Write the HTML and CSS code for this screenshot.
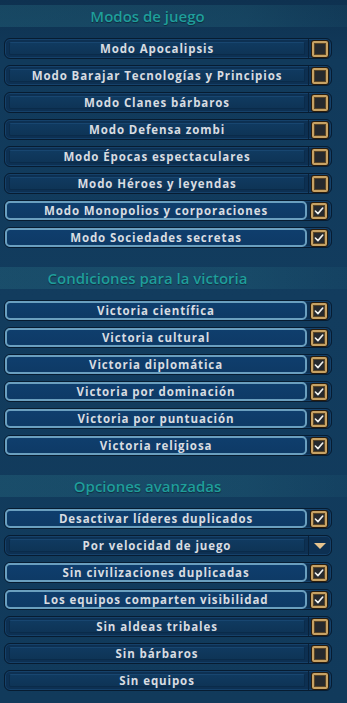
FILE: index.html
```html
<!DOCTYPE html>
<html lang="es">
<head>
<meta charset="utf-8">
<link rel="stylesheet" href="styles.css">
</head>
<body>
<div class="panel">
  <section class="sec">
    <h2 class="hdr">Modos de juego</h2>
    <ul class="rows">
      <li class="row"><span class="label">Modo Apocalipsis</span><span class="ctl"><span class="box"></span></span></li>
      <li class="row"><span class="label">Modo Barajar Tecnologías y Principios</span><span class="ctl"><span class="box"></span></span></li>
      <li class="row"><span class="label">Modo Clanes bárbaros</span><span class="ctl"><span class="box"></span></span></li>
      <li class="row"><span class="label">Modo Defensa zombi</span><span class="ctl"><span class="box"></span></span></li>
      <li class="row"><span class="label">Modo Épocas espectaculares</span><span class="ctl"><span class="box"></span></span></li>
      <li class="row"><span class="label">Modo Héroes y leyendas</span><span class="ctl"><span class="box"></span></span></li>
      <li class="row on"><span class="label">Modo Monopolios y corporaciones</span><span class="ctl"><span class="box"><svg viewBox="0 0 15 15"><path d="M3 7.5 L6.2 10.8 L12.2 3.8"/></svg></span></span></li>
      <li class="row on"><span class="label">Modo Sociedades secretas</span><span class="ctl"><span class="box"><svg viewBox="0 0 15 15"><path d="M3 7.5 L6.2 10.8 L12.2 3.8"/></svg></span></span></li>
    </ul>
  </section>
  <section class="sec">
    <h2 class="hdr">Condiciones para la victoria</h2>
    <ul class="rows">
      <li class="row on"><span class="label">Victoria científica</span><span class="ctl"><span class="box"><svg viewBox="0 0 15 15"><path d="M3 7.5 L6.2 10.8 L12.2 3.8"/></svg></span></span></li>
      <li class="row on"><span class="label">Victoria cultural</span><span class="ctl"><span class="box"><svg viewBox="0 0 15 15"><path d="M3 7.5 L6.2 10.8 L12.2 3.8"/></svg></span></span></li>
      <li class="row on"><span class="label">Victoria diplomática</span><span class="ctl"><span class="box"><svg viewBox="0 0 15 15"><path d="M3 7.5 L6.2 10.8 L12.2 3.8"/></svg></span></span></li>
      <li class="row on"><span class="label">Victoria por dominación</span><span class="ctl"><span class="box"><svg viewBox="0 0 15 15"><path d="M3 7.5 L6.2 10.8 L12.2 3.8"/></svg></span></span></li>
      <li class="row on"><span class="label">Victoria por puntuación</span><span class="ctl"><span class="box"><svg viewBox="0 0 15 15"><path d="M3 7.5 L6.2 10.8 L12.2 3.8"/></svg></span></span></li>
      <li class="row on"><span class="label">Victoria religiosa</span><span class="ctl"><span class="box"><svg viewBox="0 0 15 15"><path d="M3 7.5 L6.2 10.8 L12.2 3.8"/></svg></span></span></li>
    </ul>
  </section>
  <section class="sec">
    <h2 class="hdr">Opciones avanzadas</h2>
    <ul class="rows">
      <li class="row on"><span class="label">Desactivar líderes duplicados</span><span class="ctl"><span class="box"><svg viewBox="0 0 15 15"><path d="M3 7.5 L6.2 10.8 L12.2 3.8"/></svg></span></span></li>
      <li class="row drop"><span class="label">Por velocidad de juego</span><span class="ctl"><span class="tri"></span></span></li>
      <li class="row on"><span class="label">Sin civilizaciones duplicadas</span><span class="ctl"><span class="box"><svg viewBox="0 0 15 15"><path d="M3 7.5 L6.2 10.8 L12.2 3.8"/></svg></span></span></li>
      <li class="row on"><span class="label">Los equipos comparten visibilidad</span><span class="ctl"><span class="box"><svg viewBox="0 0 15 15"><path d="M3 7.5 L6.2 10.8 L12.2 3.8"/></svg></span></span></li>
      <li class="row"><span class="label">Sin aldeas tribales</span><span class="ctl"><span class="box"></span></span></li>
      <li class="row"><span class="label">Sin bárbaros</span><span class="ctl"><span class="box"></span></span></li>
      <li class="row"><span class="label">Sin equipos</span><span class="ctl"><span class="box"></span></span></li>
    </ul>
  </section>
  <div class="foot"></div>
</div>
</body>
</html>
```

FILE: styles.css
```css
* { box-sizing: border-box; }
html, body {
  margin: 0;
  padding: 0;
  width: 347px;
  height: 703px;
  overflow: hidden;
}
body {
  background: linear-gradient(180deg, #0e3150 0px, #113a5b 60px, #123c5e 300px, #113a5b 703px);
  font-family: "Open Sans", "Liberation Sans", sans-serif;
}
.panel {
  display: flex;
  flex-direction: column;
  padding-top: 5px;
  gap: 19px;
}
.sec {
  display: flex;
  flex-direction: column;
  gap: 11px;
}
.hdr {
  margin: 0;
  height: 22px;
  line-height: 22px;
  padding-right: 52px;
  text-align: center;
  font-family: "Open Sans", sans-serif;
  font-weight: 600;
  font-size: 15px;
  color: #1f9e9b;
  background: linear-gradient(90deg, rgba(40,110,130,0.35) 0%, rgba(40,110,130,0.28) 70%, rgba(40,110,130,0.12) 100%);
  text-shadow: 0 1px 1px rgba(0,0,0,0.4);
}
.rows {
  list-style: none;
  margin: 0;
  padding: 0 0 0 4px;
  display: flex;
  flex-direction: column;
  gap: 6px;
}
.row {
  width: 328px;
  height: 21px;
  display: flex;
  align-items: stretch;
  border-radius: 6px;
  background: #0d3052;
  border: 1px solid #071c31;
  box-shadow: inset 0 0 0 1px #15416a;
}
.label {
  flex: 1;
  display: flex;
  align-items: center;
  justify-content: center;
  margin: 3px 3px 3px 4px;
  border: 1px solid #0a2b4a;
  border-top-color: #184670;
  border-radius: 2px;
  background: linear-gradient(180deg, #103a60, #0e3456);
  color: #d8dce1;
  font-weight: 700;
  font-size: 11.5px;
  letter-spacing: 0.9px;
  white-space: nowrap;
}
.ctl {
  width: 23px;
  border-left: 1px solid #08213a;
  display: flex;
  align-items: center;
  justify-content: center;
}
.box {
  width: 16px;
  height: 16px;
  border: 2px solid #c7a264;
  border-radius: 2px;
  background: #26292d;
  box-shadow: inset 0 0 0 1px #5a4526, 0 0 0 1px #2a1c0c;
  display: flex;
  align-items: center;
  justify-content: center;
}
.box svg {
  width: 12px;
  height: 12px;
}
.box path {
  fill: none;
  stroke: #f2f2ee;
  stroke-width: 2;
  stroke-linecap: round;
  stroke-linejoin: round;
}
.on .label {
  margin: 0;
  border: 2px solid #6a9fbf;
  border-radius: 5px;
  background: linear-gradient(180deg, #0f3e6d, #0e3a66);
}
.on .ctl {
  border-left: none;
  width: 24px;
}
.tri {
  width: 0;
  height: 0;
  border-left: 6px solid transparent;
  border-right: 6px solid transparent;
  border-top: 6px solid #e7c48e;
}
.foot {
  margin: -5px 16px 0 21px;
  height: 8px;
  background: #0a1b2b;
}
```
